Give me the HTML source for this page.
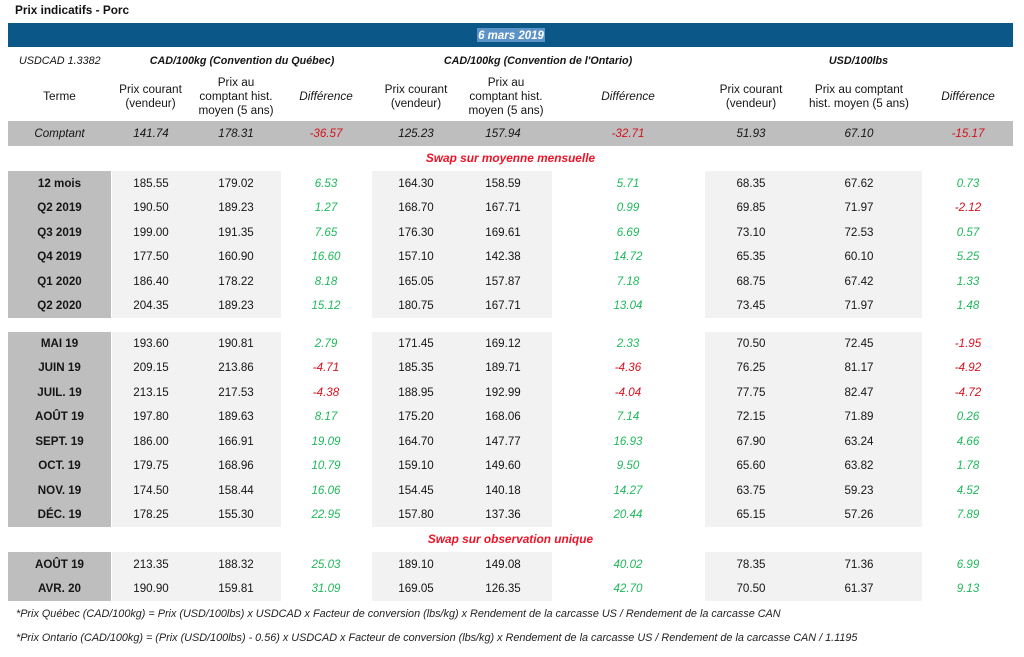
<!DOCTYPE html>
<html lang="fr"><head><meta charset="utf-8"><title>Prix indicatifs - Porc</title>
<style>
html,body{margin:0;padding:0;background:#fff}
#p{position:relative;width:1024px;height:657px;overflow:hidden;font-family:"Liberation Sans",Arial,sans-serif;font-size:11.6px;color:#151515;filter:blur(.25px)}
#p div{position:absolute}
.b{background:#f2f2f2}.g{background:#bebebe}
.r{left:0;width:1024px;height:16px;line-height:16px}
.r span{position:absolute;width:100px;text-align:center;top:0}
.r span:nth-child(1){left:9.5px;font-weight:bold}
.r span:nth-child(2){left:101px}
.r span:nth-child(3){left:186px}
.r span:nth-child(4){left:276px;font-style:italic;color:#1fb85c}
.r span:nth-child(5){left:366px}
.r span:nth-child(6){left:453px}
.r span:nth-child(7){left:578px;font-style:italic;color:#1fb85c}
.r span:nth-child(8){left:701px}
.r span:nth-child(9){left:809px}
.r span:nth-child(10){left:918px;font-style:italic;color:#1fb85c}
.r span.n{color:#d5121f!important}
.c .n{font-style:italic}
.c span{font-style:italic;font-weight:normal!important}
.h{text-align:center;line-height:14px;width:130px;font-size:11.75px}
.i{font-style:italic}
.t{text-align:center;font-weight:bold;font-style:italic;font-size:10.75px;white-space:nowrap;line-height:14px}
.s{color:#ee1326;font-size:11.85px;left:-1.5px;width:1024px;line-height:14px;text-align:center;font-weight:bold;font-style:italic}
.f{left:16px;font-style:italic;font-size:10.84px;white-space:nowrap;line-height:14px;color:#222}
</style></head><body><div id="p">
<div style="left:15px;top:3px;font-weight:bold;font-size:11.8px;line-height:15px;color:#111">Prix indicatifs - Porc</div>
<div style="left:8px;top:23px;width:1005px;height:24px;background:#0b5788"></div>
<div style="left:477px;top:28px;width:68px;height:14px;background:#5b93c7;color:#fff;font-weight:bold;font-style:italic;font-size:11.5px;line-height:16px;text-align:center;white-space:nowrap">6 mars 2019</div>

<div class="i" style="left:19px;top:54px;font-size:10.8px;line-height:14px">USDCAD 1.3382</div>
<div class="t" style="left:142px;width:200px;top:54px">CAD/100kg (Convention du Québec)</div>
<div class="t" style="left:438px;width:200px;top:54px">CAD/100kg (Convention de l'Ontario)</div>
<div class="t" style="left:768.5px;width:180px;top:54px">USD/100lbs</div>

<div class="h" style="left:-5.5px;top:90px">Terme</div>
<div class="h" style="left:85.5px;top:83px">Prix courant<br>(vendeur)</div>
<div class="h" style="left:171px;top:76px">Prix au<br>comptant hist.<br>moyen (5 ans)</div>
<div class="h i" style="left:261px;top:90px">Différence</div>
<div class="h" style="left:351px;top:83px">Prix courant<br>(vendeur)</div>
<div class="h" style="left:441px;top:76px">Prix au<br>comptant hist.<br>moyen (5 ans)</div>
<div class="h i" style="left:563px;top:90px">Différence</div>
<div class="h" style="left:686px;top:83px">Prix courant<br>(vendeur)</div>
<div class="h" style="left:794px;top:83px">Prix au comptant<br>hist. moyen (5 ans)</div>
<div class="h i" style="left:903px;top:90px">Différence</div>

<div class="g" style="left:8px;top:121px;width:1005px;height:25px"></div>
<div class="g" style="left:8px;top:171px;width:103px;height:147px"></div>
<div class="g" style="left:8px;top:332px;width:103px;height:195px"></div>
<div class="g" style="left:8px;top:552px;width:103px;height:49px"></div>
<div class="b" style="left:112px;top:171px;width:169px;height:147px"></div>
<div class="b" style="left:372px;top:171px;width:180px;height:147px"></div>
<div class="b" style="left:705px;top:171px;width:217px;height:147px"></div>
<div class="b" style="left:112px;top:332px;width:169px;height:195px"></div>
<div class="b" style="left:372px;top:332px;width:180px;height:195px"></div>
<div class="b" style="left:705px;top:332px;width:217px;height:195px"></div>
<div class="b" style="left:112px;top:552px;width:169px;height:49px"></div>
<div class="b" style="left:372px;top:552px;width:180px;height:49px"></div>
<div class="b" style="left:705px;top:552px;width:217px;height:49px"></div>

<div class="r c" style="top:126px"><span>Comptant</span><span>141.74</span><span>178.31</span><span class="n">-36.57</span><span>125.23</span><span>157.94</span><span class="n">-32.71</span><span>51.93</span><span>67.10</span><span class="n">-15.17</span></div>
<div class="s" style="top:151px">Swap sur moyenne mensuelle</div>

<div class="r" style="top:176px"><span>12 mois</span><span>185.55</span><span>179.02</span><span>6.53</span><span>164.30</span><span>158.59</span><span>5.71</span><span>68.35</span><span>67.62</span><span>0.73</span></div>
<div class="r" style="top:200px"><span>Q2 2019</span><span>190.50</span><span>189.23</span><span>1.27</span><span>168.70</span><span>167.71</span><span>0.99</span><span>69.85</span><span>71.97</span><span class="n">-2.12</span></div>
<div class="r" style="top:225px"><span>Q3 2019</span><span>199.00</span><span>191.35</span><span>7.65</span><span>176.30</span><span>169.61</span><span>6.69</span><span>73.10</span><span>72.53</span><span>0.57</span></div>
<div class="r" style="top:249px"><span>Q4 2019</span><span>177.50</span><span>160.90</span><span>16.60</span><span>157.10</span><span>142.38</span><span>14.72</span><span>65.35</span><span>60.10</span><span>5.25</span></div>
<div class="r" style="top:274px"><span>Q1 2020</span><span>186.40</span><span>178.22</span><span>8.18</span><span>165.05</span><span>157.87</span><span>7.18</span><span>68.75</span><span>67.42</span><span>1.33</span></div>
<div class="r" style="top:298px"><span>Q2 2020</span><span>204.35</span><span>189.23</span><span>15.12</span><span>180.75</span><span>167.71</span><span>13.04</span><span>73.45</span><span>71.97</span><span>1.48</span></div>

<div class="r" style="top:336px"><span>MAI 19</span><span>193.60</span><span>190.81</span><span>2.79</span><span>171.45</span><span>169.12</span><span>2.33</span><span>70.50</span><span>72.45</span><span class="n">-1.95</span></div>
<div class="r" style="top:360px"><span>JUIN 19</span><span>209.15</span><span>213.86</span><span class="n">-4.71</span><span>185.35</span><span>189.71</span><span class="n">-4.36</span><span>76.25</span><span>81.17</span><span class="n">-4.92</span></div>
<div class="r" style="top:385px"><span>JUIL. 19</span><span>213.15</span><span>217.53</span><span class="n">-4.38</span><span>188.95</span><span>192.99</span><span class="n">-4.04</span><span>77.75</span><span>82.47</span><span class="n">-4.72</span></div>
<div class="r" style="top:409px"><span>AOÛT 19</span><span>197.80</span><span>189.63</span><span>8.17</span><span>175.20</span><span>168.06</span><span>7.14</span><span>72.15</span><span>71.89</span><span>0.26</span></div>
<div class="r" style="top:434px"><span>SEPT. 19</span><span>186.00</span><span>166.91</span><span>19.09</span><span>164.70</span><span>147.77</span><span>16.93</span><span>67.90</span><span>63.24</span><span>4.66</span></div>
<div class="r" style="top:458px"><span>OCT. 19</span><span>179.75</span><span>168.96</span><span>10.79</span><span>159.10</span><span>149.60</span><span>9.50</span><span>65.60</span><span>63.82</span><span>1.78</span></div>
<div class="r" style="top:483px"><span>NOV. 19</span><span>174.50</span><span>158.44</span><span>16.06</span><span>154.45</span><span>140.18</span><span>14.27</span><span>63.75</span><span>59.23</span><span>4.52</span></div>
<div class="r" style="top:507px"><span>DÉC. 19</span><span>178.25</span><span>155.30</span><span>22.95</span><span>157.80</span><span>137.36</span><span>20.44</span><span>65.15</span><span>57.26</span><span>7.89</span></div>

<div class="s" style="top:532px">Swap sur observation unique</div>
<div class="r" style="top:557px"><span>AOÛT 19</span><span>213.35</span><span>188.32</span><span>25.03</span><span>189.10</span><span>149.08</span><span>40.02</span><span>78.35</span><span>71.36</span><span>6.99</span></div>
<div class="r" style="top:581px"><span>AVR. 20</span><span>190.90</span><span>159.81</span><span>31.09</span><span>169.05</span><span>126.35</span><span>42.70</span><span>70.50</span><span>61.37</span><span>9.13</span></div>

<div class="f" style="top:607px">*Prix Québec (CAD/100kg) = Prix (USD/100lbs) x USDCAD x Facteur de conversion (lbs/kg) x Rendement de la carcasse US / Rendement de la carcasse CAN</div>
<div class="f" style="top:631px">*Prix Ontario (CAD/100kg) = (Prix (USD/100lbs) - 0.56) x USDCAD x Facteur de conversion (lbs/kg) x Rendement de la carcasse US / Rendement de la carcasse CAN / 1.1195</div>
</div></body></html>
